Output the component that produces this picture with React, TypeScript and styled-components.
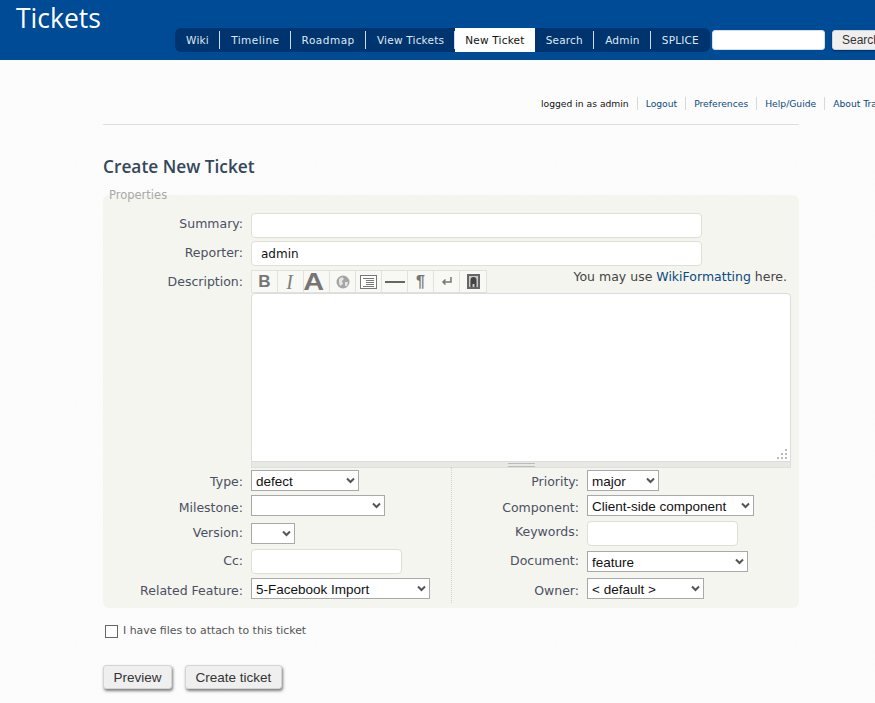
import React from 'react';
import styled, { createGlobalStyle } from 'styled-components';

const chevron =
  "url(\"data:image/svg+xml,%3Csvg xmlns='http://www.w3.org/2000/svg' width='9' height='7'%3E%3Cpath d='M1 1.5l3.5 3.5L8 1.5' fill='none' stroke='%23555' stroke-width='2'/%3E%3C/svg%3E\")";

const noise =
  "url(\"data:image/svg+xml,%3Csvg xmlns='http://www.w3.org/2000/svg' width='240' height='240'%3E%3Cfilter id='n'%3E%3CfeTurbulence type='fractalNoise' baseFrequency='0.55' numOctaves='2' stitchTiles='stitch'/%3E%3CfeColorMatrix values='0 0 0 0 0.6 0 0 0 0 0.6 0 0 0 0 0.6 0.5 0 0 0 -0.2'/%3E%3C/filter%3E%3Crect width='240' height='240' filter='url(%23n)' opacity='0.1'/%3E%3C/svg%3E\")";

const GlobalStyle = createGlobalStyle`
  html, body {
    margin: 0;
    padding: 0;
    overflow: hidden;
    height: 703px;
    background: #fcfcfc ${noise};
    font-family: "DejaVu Sans", Verdana, sans-serif;
  }
`;

const Page = styled.div`
  width: 875px;
  height: 703px;
  overflow: hidden;
`;

const Header = styled.header`
  display: flex;
  align-items: flex-start;
  height: 60px;
  background: #004b96;
  white-space: nowrap;
`;

const Title = styled.div`
  width: 159px;
  padding: 2px 0 0 16px;
  flex: none;
  font: 400 26.5px/33px "Open Sans", sans-serif;
  color: #fff;
`;

const Nav = styled.nav`
  display: flex;
  flex: none;
  height: 24px;
  margin-top: 28px;
  background: #00346e;
  border-radius: 6px;
`;

const NavItem = styled.a<{ $active?: boolean; $last?: boolean; $spacing?: number }>`
  position: relative;
  display: flex;
  align-items: center;
  padding: 0 ${(p) => (p.$active ? 10 : 11.1)}px;
  font-size: 10.5px;
  letter-spacing: ${(p) => p.$spacing ?? 0.2}px;
  color: ${(p) => (p.$active ? '#111' : '#dfe8f2')};
  background: ${(p) => (p.$active ? '#fff' : 'transparent')};
  ${(p) =>
    p.$last
      ? ''
      : `&::after {
    content: '';
    position: absolute;
    right: 0;
    top: 3px;
    bottom: 3px;
    width: 1px;
    background: #cfdbe8;
  }`}
`;

const SearchInput = styled.input`
  flex: none;
  box-sizing: border-box;
  width: 113px;
  height: 20px;
  margin: 30px 0 0 2px;
  border: 1px solid #dcdcdc;
  border-radius: 3px;
  background: #fff;
`;

const Button = styled.button`
  flex: none;
  box-sizing: border-box;
  height: 24px;
  padding: 0 9.500px;
  border: 1px solid #d4d4d0;
  border-radius: 3px;
  background: #efefef;
  box-shadow: 1px 2px 3px rgba(0, 0, 0, 0.5);
  font: 13.500px "Liberation Sans", Arial, sans-serif;
  color: #333;
`;

const HeaderButton = styled(Button)`
  height: 20px;
  margin: 30px 0 0 7px;
  padding: 0 9px;
  font-size: 12px;
  box-shadow: 0 1px 2px rgba(0, 0, 0, 0.4);
`;

const Main = styled.main`
  width: 696px;
  margin-left: 103px;
`;

const MetaNav = styled.div`
  display: flex;
  width: 772px;
  height: 64px;
  padding: 37px 0 0;
  box-sizing: border-box;
  white-space: nowrap;
  margin-left: 438px;
  font-size: 9.200px;
`;

const MetaItem = styled.a<{ $plain?: boolean }>`
  height: 13px;
  line-height: 13px;
  padding: 0 8px;
  border-right: 1px solid #d8d8d8;
  color: ${(p) => (p.$plain ? '#111' : '#0b4a80')};
  &:first-child { padding-left: 0; }
  &:last-child { border-right: 0; }
`;

const Rule = styled.hr`
  margin: 0;
  border: 0;
  border-top: 1px solid #dedede;
`;

const Heading = styled.h1`
  margin: 31px 0 0;
  font: 600 17.300px/22px "Open Sans", sans-serif;
  color: #33475b;
`;

const Properties = styled.fieldset`
  box-sizing: border-box;
  width: 696px;
  height: 420px;
  padding: 0 8px 0 0;
  margin: 10px 0 0;
  border: 0;
  min-inline-size: 0;
  border-radius: 6px;
  background: #f5f5ef;
`;

const Legend = styled.legend`
  margin-left: 6px;
  padding: 0;
  height: 14px;
  font-size: 11.500px;
  line-height: 14px;
  color: #a8a8a8;
`;

const Row = styled.div<{ $height: number }>`
  display: flex;
  align-items: flex-start;
  height: ${(p) => p.$height}px;
`;

const Stack = styled.div`
  display: flex;
  flex-direction: column;
`;

const Label = styled.label<{ $width: number; $top?: number }>`
  flex: none;
  width: ${(p) => p.$width}px;
  padding-top: ${(p) => p.$top ?? 3}px;
  margin-right: 8px;
  text-align: right;
  font-size: 12.500px;
  line-height: 16px;
  color: #4a5064;
  white-space: nowrap;
`;

const Input = styled.input<{ $width: number }>`
  box-sizing: border-box;
  width: ${(p) => p.$width}px;
  height: 25px;
  padding: 1px 9px 0;
  border: 1px solid #dfdfd8;
  border-radius: 4px;
  background: #fff;
  font: 12px "DejaVu Sans", sans-serif;
  color: #111;
`;

const Select = styled.select<{ $width: number }>`
  appearance: none;
  box-sizing: border-box;
  width: ${(p) => p.$width}px;
  height: 21px;
  padding: 1px 0 0 4px;
  border: 1px solid #a9a9a9;
  border-radius: 0;
  background: #fff ${chevron} no-repeat right 3px center;
  font: 13.500px "Liberation Sans", Arial, sans-serif;
  color: #111;
`;

const Editor = styled.div`
  width: 540px;
`;

const EditorHead = styled.div`
  display: flex;
  justify-content: space-between;
  align-items: flex-start;
  height: 22px;
  margin-top: 1px;
`;

const Toolbar = styled.div`
  display: flex;
  box-sizing: border-box;
  height: 23px;
  margin-top: -1px;
  border: 1px solid #e2e2dc;
  background: #f8f8f4;
`;

const ToolButton = styled.span`
  display: flex;
  align-items: center;
  justify-content: center;
  box-sizing: border-box;
  width: 26px;
  border-right: 1px solid #e2e2dc;
  &:last-child { border-right: 0; }
`;

const Glyph = styled.span<{ $size: number; $stretch?: number; $shift?: number }>`
  margin-right: ${(p) => p.$shift ?? 0}px;
  font: 700 ${(p) => p.$size}px/1 "Liberation Sans", Arial, sans-serif;
  color: #757575;
  transform: scaleX(${(p) => p.$stretch ?? 1});
`;

const ItalicGlyph = styled.span`
  margin-right: 2px;
  font: italic 400 20px/1 "Liberation Serif", serif;
  color: #808080;
`;

const Hint = styled.div`
  margin-top: -2px;
  padding-right: 4px;
  font-size: 12.500px;
  line-height: 16px;
  color: #444;
  a { color: #0b4a80; }
`;

const TextArea = styled.div`
  position: relative;
  box-sizing: border-box;
  height: 169px;
  border: 1px solid #dcdcdc;
  border-radius: 4px 4px 0 0;
  background: #fff;
`;

const Grip = styled.svg`
  position: absolute;
  right: 1px;
  bottom: 1px;
`;

const Resizer = styled.div`
  display: flex;
  justify-content: center;
  box-sizing: border-box;
  height: 6px;
  padding-top: 1px;
  border: 1px solid #dedede;
  border-top: 0;
  background: #e9e9e4;
  &::before {
    content: '';
    width: 27px;
    height: 2px;
    border-top: 1px solid #bbb;
    border-bottom: 1px solid #bbb;
  }
`;

const Columns = styled.div`
  display: flex;
`;

const Column = styled(Stack)<{ $divider?: boolean }>`
  padding-top: 3px;
  height: 136px;
  box-sizing: border-box;
  width: 349px;
  flex: none;
  ${(p) => (p.$divider ? 'border-right: 1px dotted #d0d0c8;' : '')}
`;

const AttachRow = styled.label`
  display: flex;
  align-items: center;
  gap: 5px;
  margin: 15px 0 0 2px;
  font-size: 10.900px;
  line-height: 16px;
  color: #555;
`;

const Check = styled.input`
  appearance: none;
  width: 13px;
  height: 13px;
  margin: 0;
  border: 1px solid #666;
  background: #fff;
`;

const Actions = styled.div`
  display: flex;
  gap: 13px;
  margin-top: 26px;
`;

const FormTop = styled(Stack)`
  padding-top: 11px;
`;

const navItems = [
  { name: 'Wiki' },
  { name: 'Timeline', spacing: 0.45 },
  { name: 'Roadmap', spacing: 0.5 },
  { name: 'View Tickets' },
  { name: 'New Ticket' },
  { name: 'Search' },
  { name: 'Admin' },
  { name: 'SPLICE' },
];
const metaItems = ['Logout', 'Preferences', 'Help/Guide', 'About Trac'];

const leftRows = [
  { label: 'Type:', kind: 'select', value: 'defect', width: 108, height: 25, top: 4 },
  { label: 'Milestone:', kind: 'select', value: '', width: 134, height: 28, top: 5 },
  { label: 'Version:', kind: 'select', value: '', width: 44, height: 26, top: 2 },
  { label: 'Cc:', kind: 'input', value: '', width: 151, height: 29, top: 4 },
  { label: 'Related Feature:', kind: 'select', value: '5-Facebook Import', width: 179, height: 25, top: 5 },
];

const rightRows = [
  { label: 'Priority:', kind: 'select', value: 'major', width: 72, height: 25, top: 4 },
  { label: 'Component:', kind: 'select', value: 'Client-side component', width: 167, height: 26, top: 5 },
  { label: 'Keywords:', kind: 'input', value: '', width: 151, height: 30, top: 3 },
  { label: 'Document:', kind: 'select', value: 'feature', width: 161, height: 27, top: 2 },
  { label: 'Owner:', kind: 'select', value: '< default >', width: 117, height: 25, top: 5 },
];

type FieldRow = (typeof leftRows)[number];

const Field = ({ row, labelWidth }: { row: FieldRow; labelWidth: number }) => (
  <Row $height={row.height}>
    <Label $width={labelWidth} $top={row.top}>{row.label}</Label>
    {row.kind === 'select' ? (
      <Select $width={row.width} defaultValue={row.value}>
        <option value={row.value}>{row.value}</option>
      </Select>
    ) : (
      <Input $width={row.width} />
    )}
  </Row>
);

const App = () => (
  <Page>
    <GlobalStyle />
    <Header>
      <Title>Tickets</Title>
      <Nav>
        {navItems.map((item, i) => (
          <NavItem
            key={item.name}
            $active={item.name === 'New Ticket'}
            $last={i === navItems.length - 1 || item.name === 'New Ticket'}
            $spacing={item.spacing}
          >
            {item.name}
          </NavItem>
        ))}
      </Nav>
      <SearchInput />
      <HeaderButton>Search</HeaderButton>
    </Header>
    <Main>
      <MetaNav>
        <MetaItem $plain>logged in as admin</MetaItem>
        {metaItems.map((item) => (
          <MetaItem key={item}>{item}</MetaItem>
        ))}
      </MetaNav>
      <Rule />
      <Heading>Create New Ticket</Heading>
      <Properties>
        <Legend>Properties</Legend>
        <FormTop>
          <Row $height={28}>
            <Label $width={140}>Summary:</Label>
            <Input $width={451} />
          </Row>
          <Row $height={29}>
            <Label $width={140} $top={4}>Reporter:</Label>
            <Input $width={451} defaultValue="admin" />
          </Row>
          <Row $height={197}>
            <Label $width={140} $top={4}>Description:</Label>
            <Editor>
              <EditorHead>
                <Toolbar>
                  <ToolButton><Glyph $size={17}>B</Glyph></ToolButton>
                  <ToolButton><ItalicGlyph>I</ItalicGlyph></ToolButton>
                  <ToolButton><Glyph $size={24} $stretch={1.2} $shift={5}>A</Glyph></ToolButton>
                  <ToolButton>
                    <svg width="14" height="14" viewBox="0 0 14 14">
                      <circle cx="7" cy="7" r="6.5" fill="#a5a5a5" />
                      <path d="M3 4l3-2 2 2-2 2 1 3-3 2-1-3zM9 7l3 0-1 4-2 0z" fill="#e4e4e4" />
                    </svg>
                  </ToolButton>
                  <ToolButton>
                    <svg width="17" height="14" viewBox="0 0 17 14">
                      <rect x="0.5" y="0.5" width="16" height="13" fill="#fff" stroke="#777" />
                      <path d="M3 3.5h11M6 5.5h8M6 7.5h8M6 9.5h8M3 11.5h11" stroke="#777" />
                    </svg>
                  </ToolButton>
                  <ToolButton>
                    <svg width="20" height="4" viewBox="0 0 20 4">
                      <rect y="1" width="20" height="2" fill="#666" />
                    </svg>
                  </ToolButton>
                  <ToolButton><Glyph $size={16}>¶</Glyph></ToolButton>
                  <ToolButton>
                    <svg width="11" height="9" viewBox="0 0 11 9">
                      <path d="M10 0v5H2M4.500 2.500L2 5l2.500 2.500" fill="none" stroke="#777" strokeWidth="1.500" />
                    </svg>
                  </ToolButton>
                  <ToolButton>
                    <svg width="13" height="15" viewBox="0 0 13 15">
                      <rect width="13" height="15" fill="#666" />
                      <rect x="2" y="2" width="9" height="11" fill="#c9c9c9" />
                      <path d="M3.500 13V6a3 3 0 0 1 6 0v7h-2V10h-2v3z" fill="#444" />
                    </svg>
                  </ToolButton>
                </Toolbar>
                <Hint>You may use <a>WikiFormatting</a> here.</Hint>
              </EditorHead>
              <TextArea>
                <Grip width="12" height="12" viewBox="0 0 12 12">
                  <path d="M8 1h2v2H8zM4 5h2v2H4zM8 5h2v2H8zM0 9h2v2H0zM4 9h2v2H4zM8 9h2v2H8z" fill="#bbb" />
                </Grip>
              </TextArea>
              <Resizer />
            </Editor>
          </Row>
          <Columns>
            <Column $divider>
              {leftRows.map((row) => (
                <Field key={row.label} row={row} labelWidth={140} />
              ))}
            </Column>
            <Column>
              {rightRows.map((row) => (
                <Field key={row.label} row={row} labelWidth={127} />
              ))}
            </Column>
          </Columns>
        </FormTop>
      </Properties>
      <AttachRow>
        <Check type="checkbox" />
        I have files to attach to this ticket
      </AttachRow>
      <Actions>
        <Button>Preview</Button>
        <Button>Create ticket</Button>
      </Actions>
    </Main>
  </Page>
);

export default App;
